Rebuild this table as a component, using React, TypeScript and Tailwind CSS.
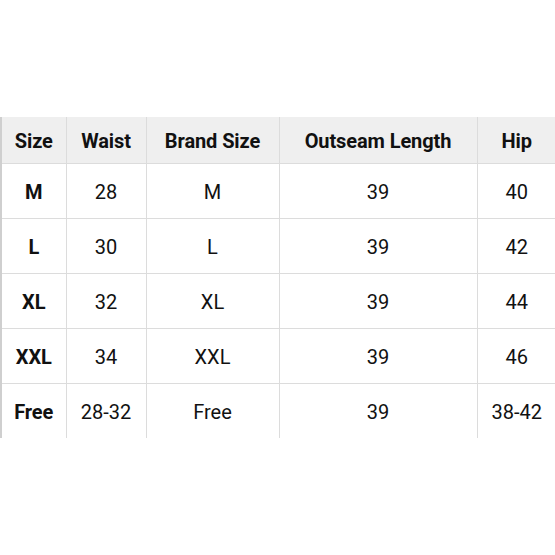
const header = ["Size", "Waist", "Brand Size", "Outseam Length", "Hip"]

const rows = [
  ["M", "28", "M", "39", "40"],
  ["L", "30", "L", "39", "42"],
  ["XL", "32", "XL", "39", "44"],
  ["XXL", "34", "XXL", "39", "46"],
  ["Free", "28-32", "Free", "39", "38-42"],
]

const widths = ["w-[65px]", "w-[80px]", "w-[133px]", "w-[198px]", "w-[79px]"]

export default function App() {
  return (
    <div className="w-[555px] h-[555px] bg-white pt-[117px] font-['Roboto',sans-serif] text-[#111]">
      <table className="w-[555px] table-fixed border-collapse border-l-2 border-[#cfcfcf]">
        <thead>
          <tr className="h-[46px] bg-[#efefef]">
            {header.map((h, i) => (
              <th
                key={h}
                className={`${widths[i]} pt-[2px] text-[20px] font-bold tracking-[-0.1px] text-center border-b border-[#dcdcdc] ${i < 4 ? "border-r" : ""} border-r-[#dcdcdc]`}
              >
                {h}
              </th>
            ))}
          </tr>
        </thead>
        <tbody>
          {rows.map((r, ri) => (
            <tr key={ri} className="h-[55px]">
              {r.map((c, i) => (
                <td
                  key={i}
                  className={`pt-[2px] text-[20px] text-center ${i === 0 ? "font-bold tracking-[-0.1px]" : "font-normal"} ${ri < 4 ? "border-b border-b-[#dcdcdc]" : ""} ${i < 4 ? "border-r border-r-[#dcdcdc]" : ""}`}
                >
                  {c}
                </td>
              ))}
            </tr>
          ))}
        </tbody>
      </table>
    </div>
  )
}
